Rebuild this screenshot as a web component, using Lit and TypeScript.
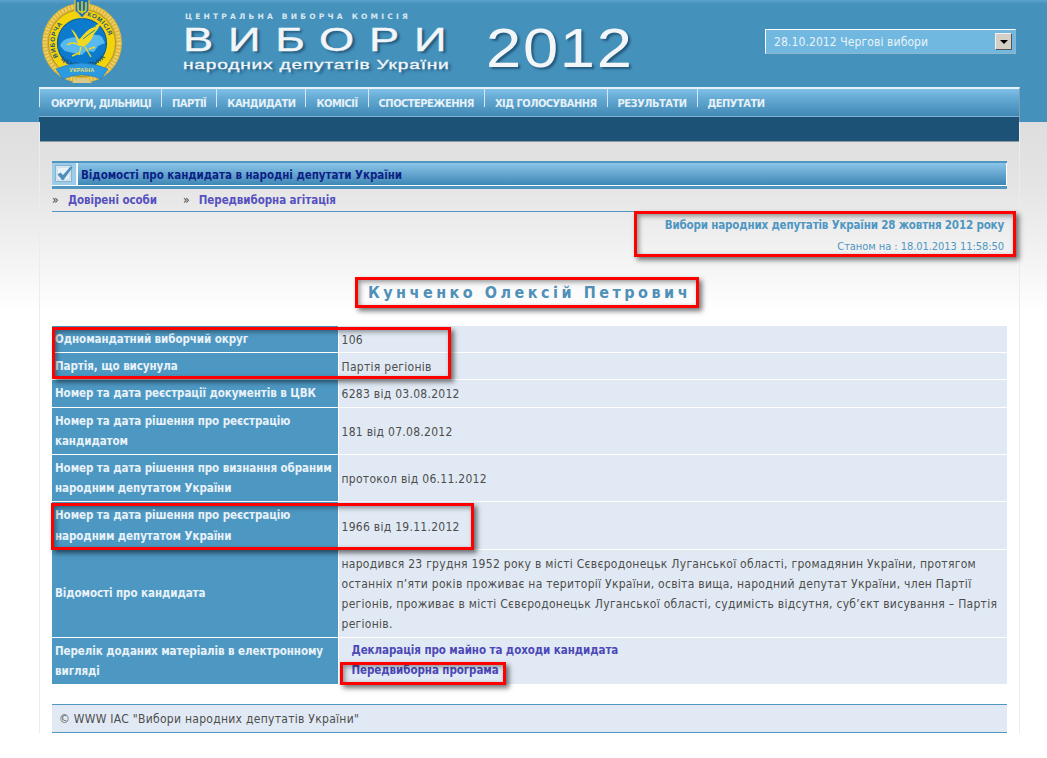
import { LitElement, html, css, svg } from "lit";
import { customElement } from "lit/decorators.js";

const NAV = ["ОКРУГИ, ДІЛЬНИЦІ", "ПАРТІЇ", "КАНДИДАТИ", "КОМІСІЇ", "СПОСТЕРЕЖЕННЯ", "ХІД ГОЛОСУВАННЯ", "РЕЗУЛЬТАТИ", "ДЕПУТАТИ"];

const ROWS: [string, unknown][] = [
  ["Одномандатний виборчий округ", "106"],
  ["Партія, що висунула", "Партія регіонів"],
  ["Номер та дата реєстрації документів в ЦВК", "6283 від 03.08.2012"],
  ["Номер та дата рішення про реєстрацію кандидатом", "181 від 07.08.2012"],
  ["Номер та дата рішення про визнання обраним народним депутатом України", "протокол від 06.11.2012"],
  ["Номер та дата рішення про реєстрацію народним депутатом України", "1966 від 19.11.2012"],
  ["Відомості про кандидата", "народився 23 грудня 1952 року в місті Сєвєродонецьк Луганської області, громадянин України, протягом останніх п’яти років проживає на території України, освіта вища, народний депутат України, член Партії регіонів, проживає в місті Сєвєродонецьк Луганської області, судимість відсутня, суб’єкт висування – Партія регіонів."],
  ["Перелік доданих матеріалів в електронному вигляді", html`<a class="doc">Декларація про майно та доходи кандидата</a><a class="doc">Передвиборна програма</a>`],
];

const logo = svg`<svg width="82" height="86" viewBox="0 0 82 86">
  <defs>
    <path id="arcl" d="M17 58 A28 28 0 0 1 36 17"/>
    <path id="arcr" d="M46 17 A28 28 0 0 1 65 58"/>
    <path id="arcb" d="M13 52 A32 32 0 0 0 69 52"/>
  </defs>
  <circle cx="41" cy="44" r="40" fill="#d8b33a"/>
  <circle cx="41" cy="44" r="37" fill="none" stroke="#efd062" stroke-width="4" stroke-dasharray="2 1.4"/>
  <circle cx="41" cy="44" r="33.5" fill="#f3d30a" stroke="#b2942a" stroke-width="1"/>
  <circle cx="41" cy="44" r="24.5" fill="#0c7bce" stroke="#0d5c99" stroke-width="1.2"/>
  <text font-family="Liberation Sans" font-size="6.2" font-weight="700" fill="#17507f" letter-spacing=".7"><textPath href="#arcl">ВИБОРЧА</textPath></text>
  <text font-family="Liberation Sans" font-size="6.2" font-weight="700" fill="#17507f" letter-spacing=".7"><textPath href="#arcr">КОМІСІЯ</textPath></text>
  <text font-family="Liberation Sans" font-size="6.2" font-weight="700" fill="#17507f" letter-spacing=".7"><textPath href="#arcb" startOffset="16%">ЦЕНТРАЛЬНА</textPath></text>
  <path d="M19 47 Q21 40 29 39 Q35 37 39 40 L50 36 Q58 35 61 38 L64 44 L57 47 L53 53 L45 52 L41 56 L32 54 L24 52 Z" fill="#57b9ee"/>
  <path d="M30 30 Q35 33 38 41 Q44 33 50 29 Q54 26 60 24 Q57 31 53 35 Q50 43 44 47 L38 47 Q35 38 30 30 Z" fill="#f2d820"/>
  <path d="M41 34 Q47 29 55 27 M42 40 Q48 35 54 31" fill="none" stroke="#0c7bce" stroke-width=".9"/>
  <path d="M26 46 Q32 42 38 46 L44 47 M40 48 L38 56 M38 54 L31 57 M44 48 L50 58 M48 50 L54 48" fill="none" stroke="#f2d820" stroke-width="1.4"/>
  <path d="M15 70 Q41 58 67 70 L60 80 Q41 72 22 80 Z" fill="#2b9ae0" stroke="#1b6fb0" stroke-width=".5"/>
  <text x="41" y="73" text-anchor="middle" font-family="Liberation Sans" font-size="5.4" font-weight="700" fill="#f3e060">УКРАЇНА</text>
  <path d="M31 84 Q41 74 51 84 Z" fill="#d9c98a"/>
  <path d="M34 -1 H48 V12 Q45 14 41 19 Q37 14 34 12 Z" fill="#1570c0" stroke="#e4c13a" stroke-width="1.2"/>
  <path d="M41 2 V15 M37 3 V10 Q37 13 41 13 Q45 13 45 10 V3" fill="none" stroke="#f5d800" stroke-width="1.4"/>
</svg>`;

const checkIcon = svg`<svg width="18" height="18" viewBox="0 0 18 18">
  <rect x=".5" y=".5" width="16" height="16" fill="#e8f2f9" stroke="#8db2cc"/>
  <rect x="2" y="2" width="13" height="13" fill="none" stroke="#bcd5e6"/>
  <path d="M2.5 9.5 L5.5 7.5 L8 10 L15.5 1.5 L17.5 2.5 L8.5 15 L7 15 Z" fill="#4f8fbd"/>
</svg>`;

@customElement("app-root")
export class AppRoot extends LitElement {
  static styles = css`
    :host { display: block; width: 1047px; height: 758px; overflow: hidden; background: #fff; font-family: "DejaVu Sans Condensed", "DejaVu Sans", sans-serif; font-size: 12px; letter-spacing: .28px; color: #4d4d4d; }
    * { box-sizing: border-box; }
    .band { height: 122px; background: linear-gradient(#5ba2cb 0, #4491bc 4px); }
    .wrap { width: 981px; margin-left: 39px; position: relative; }
    .masthead { height: 87px; display: flex; position: relative; }
    .logo { margin: -1px 0 0 2px; width: 82px; height: 86px; }
    .title { margin-left: 60px; width: 303px; color: #f3f6f8; font-family: "Liberation Sans", sans-serif; text-shadow: 2px 2px 2px #24597c; letter-spacing: 0; }
    .small { font-family: "DejaVu Sans", sans-serif; font-size: 7.5px; font-weight: 700; letter-spacing: 3.22px; margin: 12px 0 0 2px; line-height: 9px; color: #d8e8f2; text-shadow: none; white-space: nowrap; }
    .big { font-size: 34px; line-height: 27px; margin-top: 5px; letter-spacing: 11.1px; transform: scaleX(1.33); transform-origin: left; white-space: nowrap; -webkit-text-stroke: .4px #f3f6f8; }
    .sub { font-size: 13px; line-height: 13px; letter-spacing: .55px; transform: scaleX(1.47); transform-origin: left; white-space: nowrap; margin-top: 5px; -webkit-text-stroke: .3px #f3f6f8; }
    .year { font-family: "Liberation Sans", sans-serif; font-size: 55px; line-height: 50px; margin: 23px 0 0 0; color: #f3f6f8; letter-spacing: 1.5px; text-shadow: 2px 2px 2px #24597c; transform: scaleX(1.15); transform-origin: left; white-space: nowrap; }
    .select { position: absolute; left: 726px; top: 29px; width: 251px; height: 25px; background: #71b8e0; border: 1px solid; border-color: #fff #8fb4cc #8fb4cc #fff; color: #e8f3fa; padding-left: 8px; line-height: 25px; font-size: 12px; letter-spacing: .1px; }
    .arrow { position: absolute; right: 3px; top: 3px; width: 17px; height: 17px; background: #d4d0c8; border: 1px solid; border-color: #f4f2ee #555 #555 #f4f2ee; display: flex; align-items: center; justify-content: center; }
    .arrow i { border: 4px solid transparent; border-top: 4px solid #000; border-bottom: 0; }
    .nav { height: 29px; display: flex; background: linear-gradient(#7fc0e8 0, #62a8d2 10px, #3f87b3 28px); border-top: 2px solid #e6f2f9; border-right: 1px solid #7f9fb5; }
    .nav a { position: relative; padding: 0 10px 0 11px; color: #e6f1f8; font-weight: 700; font-size: 11px; line-height: 30px; white-space: nowrap; letter-spacing: -.5px; }
    .nav a::before { content: ""; position: absolute; left: 0; top: -1px; height: 19px; width: 1px; background: #d5e8f3; }
    .nav a:first-child { padding-left: 12px; letter-spacing: -.68px; }
    .dark { height: 26px; background: #1b5275; border-top: 1px solid #7fb0cf; border-bottom: 1px solid #8d9aa2; border-right: 1px solid #8d9aa2; }
    .page { height: 616px; background: linear-gradient(#dedede 0, #e4e4e4 60px, #f2f2f2 130px, #fff 190px); }
    .main { position: relative; margin-left: 39px; width: 981px; height: 611px; padding: 39px 12px 0 12px; border-left: 1px solid #ececec; border-right: 1px solid #ececec; }
    .head { height: 28px; display: flex; border-top: 2px solid #4f96c1; border-bottom: 3px solid #4f96c1; background: #fff; padding-bottom: 1px; }
    .icon { width: 25px; background: #9bcdeb; border-right: 1px solid #eaf4fa; display: flex; align-items: center; justify-content: center; margin-right: 1px; }
    .bold { font-weight: 700; font-size: 11.5px; letter-spacing: -.07px; }
    .headtxt { flex: 1; padding-left: 3px; margin-right: 1px; background: linear-gradient(#8bc5e9, #3f87b5); color: #0c1f86; line-height: 25px; letter-spacing: -.05px; }
    .links { height: 23px; display: flex; align-items: center; border-bottom: 1px solid #4f96c1; }
    .links b { font-weight: 400; font-size: 12px; color: #444; margin-right: 9px; }
    .links a { color: #5650c0; margin-right: 26px; }
    .meta { text-align: right; padding: 6px 3px 0 0; color: #4f96c1; height: 46px; }
    .meta div { line-height: 15px; }
    .meta .bold { letter-spacing: -.17px; }
    .meta .stamp { margin-top: 6px; font-size: 11px; letter-spacing: -.05px; }
    .name { text-align: center; color: #4f90b8; font-weight: 700; font-size: 16px; letter-spacing: 3.5px; line-height: 20px; margin-top: 25px; height: 43px; }
    table { width: 955px; border-collapse: collapse; table-layout: fixed; }
    td { line-height: 20.2px; padding: 3px; vertical-align: middle; border-bottom: 1px solid #fff; }
    td.l { width: 286px; background: #4d98c3; color: #e9f2f8; border-right: 1px solid #fff; }
    td.v { background: #e1eaf4; color: #4d4d4d; padding: 4px 4px 2px 3px; }
    .docs { margin: -2px 0 2px; }
    .doc { display: block; color: #4c48b8; padding-left: 10px; }
    .foot { height: 29px; margin-top: 19px; background: #e1eaf4; border-top: 1px solid #4f96c1; border-bottom: 1px solid #4f96c1; line-height: 28px; padding-left: 7px; color: #4d4d4d; }
    .mark { position: absolute; border: 3px solid #f00; box-shadow: 3px 3px 5px rgba(0,0,0,.55), inset 2px 2px 5px rgba(0,0,0,.4); pointer-events: none; }
    .m1 { left: 594px; top: 89px; width: 382px; height: 46px; }
    .m2 { left: 315px; top: 155px; width: 344px; height: 31px; }
    .m3 { left: 12px; top: 205px; width: 399px; height: 52px; }
    .m4 { left: 11px; top: 381px; width: 423px; height: 47px; }
    .m5 { left: 300px; top: 540px; width: 166px; height: 23px; }
  `;

  render() {
    return html`
      <div class="band">
        <div class="wrap">
          <div class="masthead">
            <div class="logo">${logo}</div>
            <div class="title">
              <div class="small">ЦЕНТРАЛЬНА ВИБОРЧА КОМІСІЯ</div>
              <div class="big">ВИБОРИ</div>
              <div class="sub">народних депутатів України</div>
            </div>
            <div class="year">2012</div>
            <div class="select">28.10.2012 Чергові вибори<span class="arrow"><i></i></span></div>
          </div>
          <div class="nav">${NAV.map((n) => html`<a>${n}</a>`)}</div>
          <div class="dark"></div>
        </div>
      </div>
      <div class="page">
        <div class="main">
          <div class="head"><div class="icon">${checkIcon}</div><div class="headtxt bold">Відомості про кандидата в народні депутати України</div></div>
          <div class="links"><b>»</b><a class="bold">Довірені особи</a><b>»</b><a class="bold">Передвиборна агітація</a></div>
          <div class="meta"><div class="bold">Вибори народних депутатів України 28 жовтня 2012 року</div><div class="stamp">Станом на : 18.01.2013 11:58:50</div></div>
          <div class="name">Кунченко Олексій Петрович</div>
          <table>${ROWS.map(([l, v]) => html`<tr><td class="l bold">${l}</td><td class="v">${typeof v === "string" ? v : html`<div class="bold docs">${v}</div>`}</td></tr>`)}</table>
          <div class="foot">© WWW IAC "Вибори народних депутатів України"</div>
          <div class="mark m1"></div>
          <div class="mark m2"></div>
          <div class="mark m3"></div>
          <div class="mark m4"></div>
          <div class="mark m5"></div>
        </div>
      </div>`;
  }
}
